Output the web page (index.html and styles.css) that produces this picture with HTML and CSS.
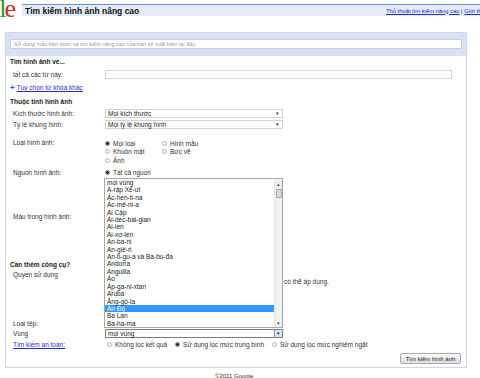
FILE: index.html
```html
<!DOCTYPE html>
<html lang="vi">
<head>
    <meta charset="UTF-8">
    <meta name="viewport" content="width=device-width, initial-scale=1.0">
    <title>Tìm kiếm hình ảnh nâng cao</title>
    <link rel="stylesheet" href="styles.css">
</head>
<body>
    <div class="top">
        <div class="logo"><span class="l">l</span><span class="e">e</span></div>
        <div class="title-bar">
            <h1>Tìm kiếm hình ảnh nâng cao</h1>
            <div class="top-links"><a href="#">Thủ thuật tìm kiếm nâng cao</a> | <a href="#">Giới thiệu về Google</a></div>
        </div>
    </div>

    <div class="panel">
        <div class="panel-band">
            <input class="query-preview" type="text" placeholder="Sử dụng mẫu bên dưới và tìm kiếm nâng cao của bạn sẽ xuất hiện tại đây.">
        </div>

        <div class="panel-body">
            <h2 class="sec sec-find">Tìm hình ảnh về...</h2>
            <div class="row r-all">
                <div class="lbl">tất cả các từ này:</div>
                <div class="val"><input class="text-in" type="text"></div>
            </div>
            <div class="more-link"><span class="plus">+</span><a href="#">Tùy chọn từ khóa khác</a></div>

            <h2 class="sec sec-attr">Thuộc tính hình ảnh</h2>
            <div class="row r-sel r-size">
                <div class="lbl">Kích thước hình ảnh:</div>
                <div class="val"><div class="select">Mọi kích thước<span class="arrow">▾</span></div></div>
            </div>
            <div class="row r-sel">
                <div class="lbl">Tỷ lệ khung hình:</div>
                <div class="val"><div class="select">Mọi tỷ lệ khung hình<span class="arrow">▾</span></div></div>
            </div>

            <div class="row r-type">
                <div class="lbl">Loại hình ảnh:</div>
                <div class="val opt-grid">
                    <div class="opt"><span class="radio on"></span>Mọi loại</div>
                    <div class="opt"><span class="radio"></span>Hình mẫu</div>
                    <div class="opt"><span class="radio"></span>Khuôn mặt</div>
                    <div class="opt"><span class="radio"></span>Bức vẽ</div>
                    <div class="opt"><span class="radio"></span>Ảnh</div>
                </div>
            </div>
            <div class="row r-source">
                <div class="lbl">Nguồn hình ảnh:</div>
                <div class="val"><div class="opt"><span class="radio on"></span>Tất cả nguồn</div></div>
            </div>
            <div class="row r-color">
                <div class="lbl">Màu trong hình ảnh:</div>
                <div class="val"></div>
            </div>

            <h2 class="sec sec-tools">Cần thêm công cụ?</h2>
            <div class="row r-rights">
                <div class="lbl">Quyền sử dụng</div>
                <div class="val rights-text">có thể áp dụng.</div>
            </div>
            <div class="row r-plain">
                <div class="lbl">Loại tệp:</div>
                <div class="val"></div>
            </div>
            <div class="row r-plain">
                <div class="lbl">Vùng</div>
                <div class="val"><div class="select select-open">mọi vùng<span class="drop-btn">▾</span></div></div>
            </div>
            <div class="row r-safe">
                <div class="lbl"><a href="#">Tìm kiếm an toàn:</a></div>
                <div class="val safe-opts">
                    <div class="opt"><span class="radio"></span>Không lọc kết quả</div>
                    <div class="opt"><span class="radio on"></span>Sử dụng lọc mức trung bình</div>
                    <div class="opt"><span class="radio"></span>Sử dụng lọc mức nghiêm ngặt</div>
                </div>
            </div>
            <div class="actions"><button class="search-btn">Tìm kiếm hình ảnh</button></div>
        </div>
    </div>

    <div class="footer">©2011 Google</div>

    <!-- danh sách vùng đang mở -->
    <div class="region-list">
        <div class="items">
            <div>mọi vùng</div>
            <div>A-rập Xê-út</div>
            <div>Ác-hen-ti-na</div>
            <div>Ác-mê-ni-a</div>
            <div>Ai Cập</div>
            <div>Ai-déc-bai-gian</div>
            <div>Ai-len</div>
            <div>Ai-xơ-len</div>
            <div>An-ba-ni</div>
            <div>An-giê-ri</div>
            <div>An-ti-gu-a và Ba-bu-đa</div>
            <div>Andorra</div>
            <div>Anguilla</div>
            <div>Áo</div>
            <div>Áp-ga-ni-xtan</div>
            <div>Aruba</div>
            <div>Ăng-gô-la</div>
            <div class="picked">Ấn Độ</div>
            <div>Ba Lan</div>
            <div>Ba-ha-ma</div>
        </div>
        <div class="scrollbar">
            <span class="sb-up">▴</span>
            <span class="sb-thumb"></span>
            <span class="sb-down">▾</span>
        </div>
    </div>
</body>
</html>
```

FILE: styles.css
```css
* {
    box-sizing: border-box;
}

html, body {
    margin: 0;
}

body {
    position: relative;
    width: 480px;
    height: 378px;
    overflow: hidden;
    background: #fff;
    font-family: "Liberation Sans", Arial, sans-serif;
    font-size: 6.5px;
    color: #333;
}

a {
    color: #2a2ac8;
}

/* header */
.top {
    display: flex;
    height: 18px;
}

.logo {
    width: 16px;
    height: 18px;
    overflow: hidden;
    display: flex;
    justify-content: flex-end;
    font-family: "Liberation Serif", serif;
    font-size: 26px;
    line-height: 18px;
    white-space: nowrap;
}

.logo .l {
    color: #1f9b32;
    margin-right: -2px;
}

.logo .e { color: #d02a1e; }

.title-bar {
    flex: 1;
    min-width: 0;
    margin: 4px 0 0 6px;
    height: 12px;
    background: #e5ecf9;
    border-top: 1px solid #6f8fd6;
    display: flex;
    align-items: center;
    overflow: hidden;
    white-space: nowrap;
}

.title-bar h1 {
    flex-shrink: 0;
    width: 364px;
    margin: 0;
    padding-left: 3px;
    font-size: 8.5px;
    color: #111;
}

.top-links {
    flex-shrink: 0;
    font-size: 5.8px;
    color: #333;
}

/* main box */
.panel {
    width: 462px;
    margin: 14px 0 0 5px;
    border: 1px solid #c9d7f1;
}

.panel-band {
    background: #d9e1f4;
    padding: 6px 4px 7px;
}

.query-preview {
    display: block;
    width: 100%;
    height: 10px;
    margin: 0;
    padding: 0 3px;
    border: 1px solid #c6d0e4;
    background: #fff;
    font: 5.5px "Liberation Sans", Arial, sans-serif;
}

.query-preview::placeholder {
    color: #9a9a9a;
}

.panel-body {
    padding: 0 0 3px 4px;
}

.sec {
    margin: 0;
    height: 10px;
    line-height: 10px;
    font-size: 6.5px;
    color: #222;
}

.sec-find { margin-top: 1px; }
.sec-attr { margin-top: 4px; }
.sec-tools { margin-top: 39px; }

.row {
    display: grid;
    grid-template-columns: 95px 1fr;
    height: 10px;
    align-items: center;
}

.lbl {
    padding-left: 3px;
    white-space: nowrap;
}

.r-all { margin-top: 2px; }

.text-in {
    display: block;
    width: 347px;
    height: 9px;
    margin: 0;
    border: 1px solid #d4d4d4;
    background: #fff;
}

.more-link {
    margin-top: 4px;
    height: 10px;
    line-height: 10px;
    display: flex;
    align-items: center;
    gap: 2px;
}

.plus {
    color: #2255cc;
    font-weight: bold;
    font-size: 8px;
}

.r-sel { height: 11px; }
.r-size { margin-top: 1px; }

.select {
    position: relative;
    width: 178px;
    height: 9px;
    line-height: 7px;
    padding-left: 2px;
    border: 1px solid #d2d2d2;
    background: #fff;
    color: #222;
    white-space: nowrap;
}

.select .arrow {
    position: absolute;
    right: 3px;
    top: 0;
    font-size: 5px;
    color: #222;
}

.select-open {
    border-color: #7c7c7c;
}

.drop-btn {
    position: absolute;
    right: 0;
    top: 0;
    width: 8px;
    height: 7px;
    background: #d3e6fa;
    border-left: 1px solid #7a9cc8;
    text-align: center;
    font-size: 5px;
    color: #222;
}

/* radio groups */
.r-type {
    margin-top: 9px;
    height: auto;
    align-items: start;
}

.r-type .lbl {
    line-height: 8.5px;
}

.opt-grid {
    display: grid;
    grid-template-columns: 57px 1fr;
}

.opt {
    display: flex;
    align-items: center;
    gap: 3px;
    height: 8.5px;
    white-space: nowrap;
    color: #333;
}

.radio {
    width: 5px;
    height: 5px;
    border-radius: 50%;
    border: 1px solid #b5b5b5;
    background: #f4f4f4;
    flex-shrink: 0;
}

.radio.on {
    border-color: #7d7d7d;
    background: radial-gradient(circle, #2b2b2b 0 1.3px, #e8e8e8 1.6px);
}

.r-source {
    margin-top: 4px;
    height: 8.5px;
}

.r-color {
    margin-top: 34px;
}

.r-rights {
    height: 48px;
    align-items: start;
}

.r-rights .lbl {
    line-height: 10px;
}

.rights-text {
    padding: 8px 0 0 179px;
    line-height: 8px;
    color: #333;
}

.r-safe {
    margin-top: 1px;
}

.safe-opts {
    display: flex;
    gap: 8px;
    padding-left: 2px;
}

.actions {
    display: flex;
    justify-content: flex-end;
    margin-top: 4px;
    padding-right: 5px;
}

.search-btn {
    width: 61px;
    height: 11px;
    padding: 0;
    border: 1px solid #a9a9a9;
    border-radius: 2px;
    background: linear-gradient(#fafafa, #dedede);
    font: 6px "Liberation Sans", Arial, sans-serif;
    color: #222;
}

.footer {
    margin-top: 4px;
    padding-left: 215px;
    font-size: 6px;
    line-height: 8px;
    color: #333;
}

/* open dropdown */
.region-list {
    position: absolute;
    left: 104px;
    top: 178px;
    width: 179px;
    height: 150px;
    display: flex;
    border: 1px solid #a8a8a8;
    background: #fff;
}

.items {
    flex: 1;
    min-width: 0;
    line-height: 7.4px;
    color: #222;
}

.items div {
    padding-left: 2px;
    white-space: nowrap;
}

.items .picked {
    background: #3399ff;
    color: #fff;
}

.scrollbar {
    position: relative;
    width: 8px;
    background: #f0f0f0;
    border-left: 1px solid #e2e2e2;
}

.sb-up, .sb-down {
    position: absolute;
    left: 0;
    width: 7px;
    text-align: center;
    font-size: 5px;
    line-height: 6px;
    color: #444;
}

.sb-up { top: 2px; }
.sb-down { bottom: 1px; }

.sb-thumb {
    position: absolute;
    left: 1px;
    top: 10px;
    width: 6px;
    height: 9px;
    border: 1px solid #a5a5a5;
    border-radius: 1px;
    background: #dcdcdc;
}
```
